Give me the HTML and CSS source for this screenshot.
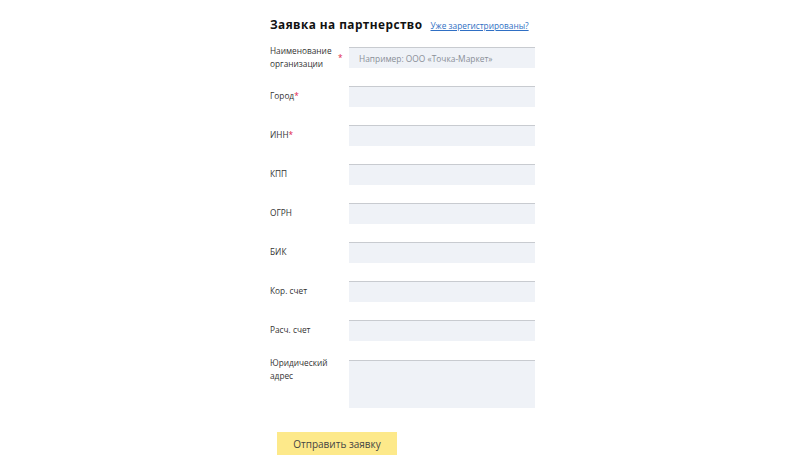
FILE: index.html
```html
<!DOCTYPE html>
<html>
<head>
  <meta charset="utf-8">
  <link rel="stylesheet" href="styles.css">
</head>
<body>
  <div class="wrap">
    <div class="head">
      <h1>Заявка на партнерство</h1>
      <a href="#" class="login">Уже зарегистрированы?</a>
    </div>

    <form class="form">
      <div class="row">
        <label>Наименование<br>организации <span class="req req-far">*</span></label>
        <input type="text" placeholder="Например: ООО «Точка-Маркет»">
      </div>
      <div class="row">
        <label>Город<span class="req">*</span></label>
        <input type="text">
      </div>
      <div class="row">
        <label>ИНН<span class="req">*</span></label>
        <input type="text">
      </div>
      <div class="row">
        <label>КПП</label>
        <input type="text">
      </div>
      <div class="row">
        <label>ОГРН</label>
        <input type="text">
      </div>
      <div class="row">
        <label>БИК</label>
        <input type="text">
      </div>
      <div class="row">
        <label>Кор. счет</label>
        <input type="text">
      </div>
      <div class="row">
        <label>Расч. счет</label>
        <input type="text">
      </div>
      <div class="row row-top">
        <label>Юридический<br>адрес</label>
        <textarea></textarea>
      </div>
      <button type="button" class="send">Отправить заявку</button>
    </form>
  </div>
</body>
</html>
```

FILE: styles.css
```css
body {
  margin: 0;
  padding: 0;
  background-color: #ffffff;
  font-family: "Open Sans", sans-serif;
  color: #333333;
}

.wrap {
  width: 266px;
  margin: 0 auto;
  padding-top: 15px;
}

.head {
  display: flex;
  align-items: baseline;
  gap: 8px;
  white-space: nowrap;
  height: 18px;
}

h1 {
  margin: 0;
  font-size: 11.8px;
  line-height: 18px;
  font-weight: 700;
  color: #111111;
  letter-spacing: 0.45px;
}

.login {
  font-size: 8.3px;
  color: #2f6fc4;
}

.form {
  margin-top: 14px;
  display: flex;
  flex-direction: column;
  gap: 18px;
}

.row {
  display: flex;
  align-items: center;
  height: 21px;
}

.row-top {
  align-items: flex-start;
  height: auto;
  margin-top: 1px;
}

.row-top label {
  margin-top: -3px;
}

label {
  width: 79px;
  flex-shrink: 0;
  font-size: 8.3px;
  line-height: 12.5px;
  color: #333333;
  position: relative;
}

.req {
  color: #e0244c;
}

.req-far {
  position: absolute;
  left: 68px;
  top: 7px;
}

input,
textarea {
  display: block;
  box-sizing: border-box;
  width: 186px;
  height: 21px;
  margin: 0;
  padding: 0 10px;
  border: none;
  border-top: 1px solid #c8cbd0;
  background-color: #eff2f7;
  font-family: "Open Sans", sans-serif;
  font-size: 8.4px;
  color: #333333;
}

input::placeholder {
  color: #8a8f97;
}

textarea {
  height: 48px;
  resize: none;
}

.send {
  margin: 6px 0 0 7px;
  width: 120px;
  height: 23px;
  border: none;
  background-color: #fde98a;
  font-family: "Open Sans", sans-serif;
  font-size: 10px;
  color: #444444;
}
```
